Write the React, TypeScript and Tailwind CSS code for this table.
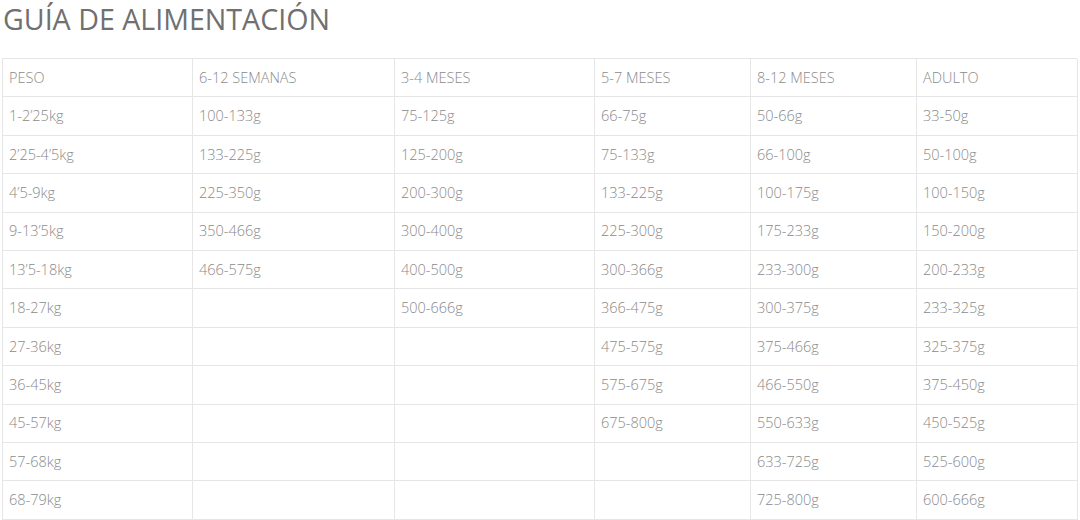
import React from "react";

const headers = ["PESO", "6-12 SEMANAS", "3-4 MESES", "5-7 MESES", "8-12 MESES", "ADULTO"];
const rows: string[][] = [
  ["1-2’25kg", "100-133g", "75-125g", "66-75g", "50-66g", "33-50g"],
  ["2’25-4’5kg", "133-225g", "125-200g", "75-133g", "66-100g", "50-100g"],
  ["4’5-9kg", "225-350g", "200-300g", "133-225g", "100-175g", "100-150g"],
  ["9-13’5kg", "350-466g", "300-400g", "225-300g", "175-233g", "150-200g"],
  ["13’5-18kg", "466-575g", "400-500g", "300-366g", "233-300g", "200-233g"],
  ["18-27kg", "", "500-666g", "366-475g", "300-375g", "233-325g"],
  ["27-36kg", "", "", "475-575g", "375-466g", "325-375g"],
  ["36-45kg", "", "", "575-675g", "466-550g", "375-450g"],
  ["45-57kg", "", "", "675-800g", "550-633g", "450-525g"],
  ["57-68kg", "", "", "", "633-725g", "525-600g"],
  ["68-79kg", "", "", "", "725-800g", "600-666g"],
];

export default function App() {
  const all = [headers, ...rows];
  return (
    <div className="w-[1080px] h-[520px] bg-white overflow-hidden font-['Open_Sans',sans-serif]">
      <h1 className="pl-[3px] pt-[1px] text-[28.6px] leading-[36px] font-normal text-[#707070]">
        GUÍA DE ALIMENTACIÓN
      </h1>
      <div className="ml-[2px] mt-[21px] w-[1075px] grid grid-cols-[190px_202px_200px_156px_166px_161px] border-t border-l border-[#e6e6e6]">
        {all.map((r, i) =>
          r.map((c, j) => (
            <div
              key={i + "-" + j}
              className="h-[38.4px] border-r border-b border-[#e6e6e6] pl-[6px] flex items-center text-[14.5px] font-light text-[#8a8a8a] whitespace-nowrap"
            >
              {c}
            </div>
          ))
        )}
      </div>
    </div>
  );
}
